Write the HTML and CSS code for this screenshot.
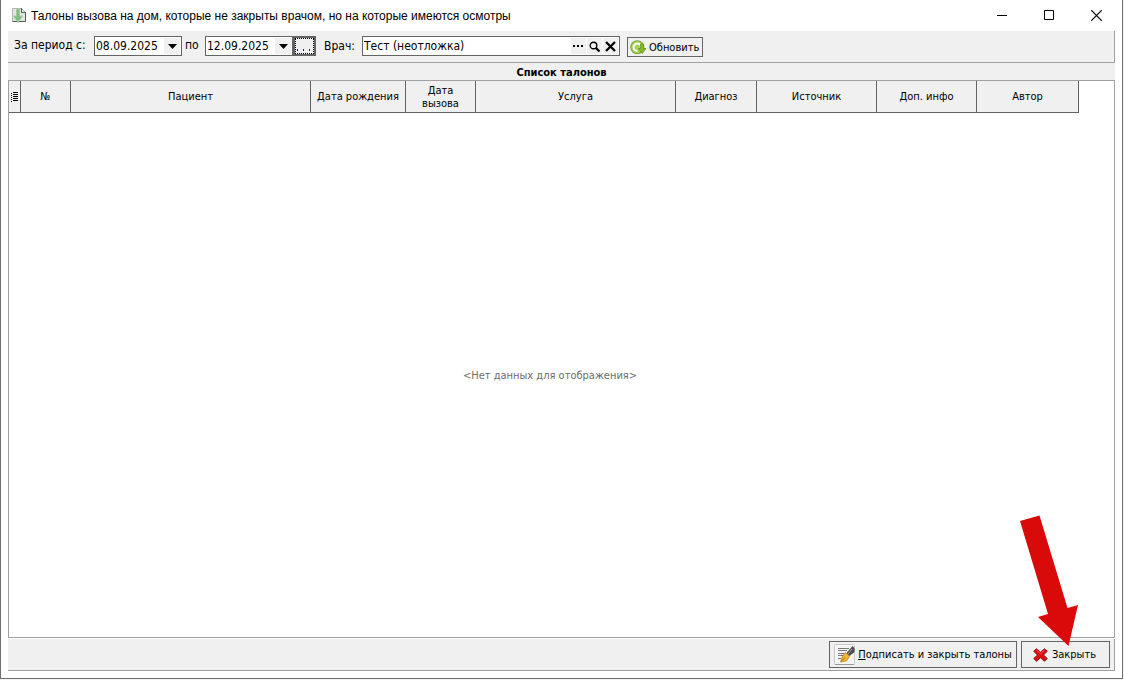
FILE: index.html
```html
<!DOCTYPE html>
<html lang="ru">
<head>
<meta charset="utf-8">
<title>Талоны вызова на дом</title>
<link rel="stylesheet" href="styles.css">
</head>
<body>
<div class="window">
  <header class="titlebar">
    <svg class="app-icon" width="14" height="16" viewBox="0 0 14 16" aria-hidden="true">
      <path d="M.5 1.500h9l4 4v9H.5z" fill="#e3e6e3" stroke="#b3b7b3"/>
      <path d="M9.500 1v4.500h4v9h-13" fill="none" stroke="#555b55"/>
      <path d="M4.500 2h3v7h3L6 15.500 1.500 9h3z" fill="#82bd82" stroke="#a5c9a5"/>
    </svg>
    <h1 class="title">Талоны вызова на дом, которые не закрыты врачом, но на которые имеются осмотры</h1>
    <button class="caption-btn" type="button" aria-label="Свернуть"><svg width="11" height="11" viewBox="0 0 11 11"><path d="M0 5.500h10" stroke="#000"/></svg></button>
    <button class="caption-btn" type="button" aria-label="Развернуть"><svg width="11" height="11" viewBox="0 0 11 11"><path d="M.5.5h9v9h-9z" fill="none" stroke="#000"/></svg></button>
    <button class="caption-btn" type="button" aria-label="Закрыть окно"><svg width="11" height="11" viewBox="0 0 11 11"><path d="M.3.3l10.400 10.400M10.700.3L.3 10.700" stroke="#000" stroke-width="1.200"/></svg></button>
  </header>

  <main class="content">
    <form class="toolbar">
      <label class="label label-from" for="from">За период с:</label>
      <div class="field date">
        <input id="from" type="text" value="08.09.2025">
        <button class="drop" type="button" aria-label="Выбрать дату начала"><svg width="9" height="5" viewBox="0 0 9 5"><path d="M0 0h9L4.500 5z"/></svg></button>
      </div>
      <label class="label label-to" for="to">по</label>
      <div class="field date">
        <input id="to" type="text" value="12.09.2025">
        <button class="drop" type="button" aria-label="Выбрать дату окончания"><svg width="9" height="5" viewBox="0 0 9 5"><path d="M0 0h9L4.500 5z"/></svg></button>
      </div>
      <button class="period" type="button" aria-label="Выбрать период"><svg width="19" height="16" viewBox="0 0 19 16"><path d="M0 .5h19M0 15.500h19M.5 1v14M18.500 1v14" fill="none" stroke="#000" stroke-dasharray="1 1"/><path d="M2 11h1v2H2zM8 11h1v2H8zM14 11h1v2h-1z" fill="#23204f"/></svg></button>
      <label class="label label-doctor" for="doctor">Врач:</label>
      <div class="field doctor">
        <input id="doctor" type="text" value="Тест (неотложка)">
        <button class="mini" type="button" aria-label="Список"><svg width="11" height="11" viewBox="0 0 11 11"><path d="M0 4h2v2H0zM4 4h2v2H4zM8 4h2v2H8z"/></svg></button>
        <button class="mini" type="button" aria-label="Найти"><svg width="11" height="11" viewBox="0 0 11 11"><circle cx="4.500" cy="4.500" r="3.300" fill="none" stroke="#000" stroke-width="1.400"/><path d="M7 7l3.500 3.500" stroke="#000" stroke-width="2.200"/></svg></button>
        <button class="mini" type="button" aria-label="Очистить"><svg width="11" height="11" viewBox="0 0 11 11"><path d="M1 1l9 9M10 1l-9 9" stroke="#000" stroke-width="2.200"/></svg></button>
      </div>
      <button class="btn refresh" type="button">
        <svg width="16" height="15" viewBox="0 0 16 15" aria-hidden="true">
          <circle cx="7.300" cy="7.300" r="7" fill="#79a83c"/>
          <circle cx="7.300" cy="7.300" r="6" fill="#a5d24e"/>
          <path d="M11 7.300a3.700 3.700 0 1 0-3.700 3.700" fill="none" stroke="#fff" stroke-width="2"/>
          <path d="M10.500 4h3v4.500H16L12.200 13.500 8.500 8.500h2z" fill="#84bb2d" stroke="#5b8e20" stroke-width=".7"/>
        </svg>
        Обновить
      </button>
    </form>

    <h2 class="caption">Список талонов</h2>

    <section class="grid">
      <table class="table">
        <colgroup><col class="c-mark"><col class="c-num"><col class="c-patient"><col class="c-birth"><col class="c-call"><col class="c-service"><col class="c-diag"><col class="c-source"><col class="c-info"><col class="c-author"></colgroup>
        <thead>
          <tr>
            <th aria-label="Столбцы"><svg width="7" height="10" viewBox="0 0 7 10"><path d="M0 1.500h1M0 3.500h1M0 5.500h1M0 7.500h1M0 9.500h1M2 .5h5M2 2.500h5M2 4.500h5M2 6.500h5M2 8.500h5" stroke="#000"/></svg></th>
            <th>№</th><th>Пациент</th><th>Дата рождения</th><th>Дата вызова</th><th>Услуга</th><th>Диагноз</th><th>Источник</th><th>Доп. инфо</th><th>Автор</th>
          </tr>
        </thead>
      </table>
      <p class="empty">&lt;Нет данных для отображения&gt;</p>
    </section>

    <footer class="footer">
      <button class="btn sign" type="button">
        <svg width="21" height="21" viewBox="0 0 21 21" aria-hidden="true">
          <rect x=".5" y=".5" width="20" height="20" rx="1" fill="#f5f5f5" stroke="#c9c9c9"/>
          <path d="M1 20.500h19" stroke="#999"/>
          <path d="M4 4.500h11M4 6.500h9M4 9.500h8M4 11.500h6M4 14.500h3" stroke="#777"/>
          <path d="M18.500 2l2 2v4l-5 4-3-3z" fill="#4c4c4c"/>
          <path d="M18 5l-4 5" stroke="#a8a8a8"/>
          <path d="M11.500 8.500l4 4-3 4.500-6 1 2-6z" fill="#f2b52d" stroke="#c07c12" stroke-width=".7"/>
          <path d="M7 17.500l4-4" stroke="#8d5a0b" stroke-width=".8"/>
        </svg>
        <span><u>П</u>одписать и закрыть талоны</span>
      </button>
      <button class="btn close" type="button">
        <svg width="15" height="14" viewBox="0 0 15 14" aria-hidden="true">
          <path d="M3.500.7L7.500 4.200 11.500.7l2.800 2.600L10.500 7l3.800 3.500-2.800 2.800-4-3.500-4 3.500L.7 10.500 4.500 7 .7 3.300z" fill="#dd0d12" stroke="#8c0b0d" stroke-width=".9" stroke-linejoin="round"/>
          <path d="M3.500 2.200l4 3.600 4-3.600" fill="none" stroke="#f4585a" stroke-width=".9"/>
        </svg>
        Закрыть
      </button>
      <svg class="pointer" width="58" height="131" viewBox="0 0 58 131" aria-hidden="true"><path d="M0 6L19.500.5 47.500 93 58 90 48.500 131 18 102l10-3z" fill="#d90a0a"/></svg>
    </footer>
  </main>
</div>
</body>
</html>
```
FILE: styles.css
```css
* { box-sizing: border-box; }

body {
  margin: 0;
  height: 100vh;
  display: flex;
  padding: 0 1px 1px 0;
  background: #f4f4f4;
  color: #000;
  font: 11px/13px "DejaVu Sans Condensed", "Noto Sans", sans-serif;
}

button, input {
  margin: 0;
  padding: 0;
  border: 0;
  border-radius: 0;
  font: inherit;
  color: inherit;
}

svg { display: block; flex: none; }

.window {
  flex: 1;
  min-width: 0;
  display: flex;
  flex-direction: column;
  padding: 0 7px 7px;
  border: solid #6e6e6e;
  border-width: 0 1px 1px;
  background: #fff;
}

.titlebar {
  display: flex;
  align-items: center;
  height: 31px;
  padding-left: 4px;
}

.app-icon { margin-top: -2px; }

.title {
  flex: 1;
  margin: 0 0 0 5px;
  font: 12px/16px "Liberation Sans", sans-serif;
  white-space: nowrap;
}

.caption-btn {
  display: grid;
  place-items: center;
  width: 47px;
  height: 30px;
  background: none;
}

.caption-btn:last-child { margin-right: -5px; }

.content {
  flex: 1;
  display: flex;
  flex-direction: column;
  min-height: 0;
}

.toolbar {
  display: flex;
  align-items: flex-start;
  padding: 5px 5px 5px 6px;
  border: solid #a0a0a0;
  border-width: 0 1px 1px 0;
  background: #f0f0f0;
}

.label, .field { font-size: 12px; }

.label { line-height: 18px; white-space: nowrap; }
.label-from { width: 80px; }
.label-to { width: 23px; padding-left: 3px; }
.label-doctor { width: 46px; padding: 1px 0 0 8px; }

.field {
  display: flex;
  align-items: center;
  height: 20px;
  border: 1px solid #646464;
  background: #fff;
}

.field input {
  flex: 1;
  min-width: 0;
  height: 18px;
  padding-left: 1px;
  background: none;
}

.date { width: 88px; padding-right: 1px; }
.doctor { width: 258px; gap: 1px; padding-right: 1px; }

.drop, .mini {
  display: grid;
  place-items: center;
  width: 16px;
  height: 16px;
  background: #f0f0f0;
}

.mini { width: 15px; }

.period {
  display: grid;
  place-items: center;
  width: 23px;
  height: 20px;
  border: 2px solid #646464;
  background: #f0f0f0;
}

.btn {
  display: flex;
  align-items: center;
  border: 1px solid #646464;
  background: #f0f0f0;
  white-space: nowrap;
}

.refresh {
  height: 20px;
  margin: 1px 0 0 7px;
  padding: 0 3px 0 2px;
  gap: 3px;
}

.caption {
  margin: 0;
  padding: 3px 0 1px;
  border-bottom: 1px solid #a0a0a0;
  background: #f0f0f0;
  font-size: 11px;
  line-height: 13px;
  text-align: center;
}

.grid {
  flex: 1;
  display: flex;
  flex-direction: column;
  border: solid #a0a0a0;
  border-width: 0 1px 1px;
}

.table {
  width: 1070px;
  table-layout: fixed;
  border-collapse: separate;
  border-spacing: 0;
}

.table th {
  height: 32px;
  padding: 0 2px;
  border: solid #646464;
  border-width: 0 1px 1px 0;
  background: #f0f0f0;
  font-weight: normal;
}

.c-mark { width: 12px; }
.c-num { width: 50px; }
.c-patient { width: 240px; }
.c-birth { width: 95px; }
.c-call { width: 70px; }
.c-service { width: 200px; }
.c-diag { width: 81px; }
.c-source { width: 120px; }
.c-info { width: 100px; }
.c-author { width: 102px; }

.empty {
  flex: 1;
  display: grid;
  place-items: center;
  margin: 0;
  padding-right: 23px;
  color: #6d6d6d;
}

.footer {
  position: relative;
  display: flex;
  justify-content: flex-end;
  gap: 4px;
  margin-top: 1px;
  padding: 2px 4px;
  border: solid #a0a0a0;
  border-width: 0 1px 1px 0;
  background: #f0f0f0;
}

.footer .btn { height: 27px; }
.sign { padding: 0 4px; gap: 3px; }
.close { padding: 0 13px 0 11px; gap: 4px; }

.pointer {
  position: absolute;
  right: 36px;
  bottom: 24px;
  pointer-events: none;
}
```
